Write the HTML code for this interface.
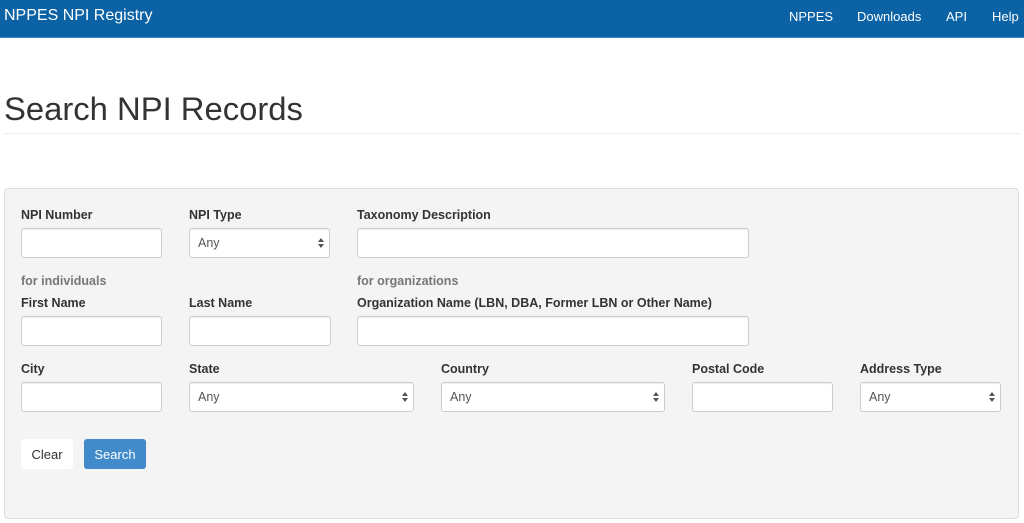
<!DOCTYPE html><html><head><style>
body{margin:0;width:1024px;height:523px;overflow:hidden;background:#fff;font-family:"Liberation Sans",Arial,sans-serif;color:#333;position:relative}
.a{position:absolute}
.nav{left:0;top:0;width:1024px;height:37px;background:#0b62a4;border-bottom:1px solid #3f86c6}
.nav span{position:absolute;color:#fff;font-size:13px;top:9px}
.lbl{position:absolute;font-size:12.5px;font-weight:bold;color:#333}
.hint{position:absolute;font-size:12.5px;font-weight:bold;color:#777}
.in{position:absolute;height:28px;background:#fff;border:1px solid #ccc;border-radius:3px;box-shadow:inset 0 1px 1px rgba(0,0,0,.06)}
.sel{font-size:12.5px;color:#555;line-height:28px;padding-left:8px;box-sizing:content-box}
.sel:after{content:"";position:absolute;right:5px;top:9px;width:0;height:0;border-left:3px solid transparent;border-right:3px solid transparent;border-bottom:4px solid #555}
.sel:before{content:"";position:absolute;right:5px;top:15px;width:0;height:0;border-left:3px solid transparent;border-right:3px solid transparent;border-top:4px solid #555}
</style></head><body>
<div class="a nav"><span style="left:4px;top:7px;font-size:16px">NPPES NPI Registry</span><span style="left:789px">NPPES</span><span style="left:857px">Downloads</span><span style="left:946px">API</span><span style="left:992px">Help</span></div>
<div class="a" style="left:4px;top:90px;font-size:32.8px;color:#333">Search NPI Records</div>
<div class="a" style="left:4px;top:133px;width:1016px;height:1px;background:#eee"></div>
<div class="a" style="left:4px;top:188px;width:1013px;height:329px;background:#f4f4f4;border:1px solid #ddd;border-radius:4px"></div>
<div class="lbl" style="left:21px;top:208px">NPI Number</div>
<div class="lbl" style="left:189px;top:208px">NPI Type</div>
<div class="lbl" style="left:357px;top:208px">Taxonomy Description</div>
<div class="in" style="left:21px;top:228px;width:139px"></div>
<div class="in sel" style="left:189px;top:228px;width:131px">Any</div>
<div class="in" style="left:357px;top:228px;width:390px"></div>
<div class="hint" style="left:21px;top:274px">for individuals</div>
<div class="hint" style="left:357px;top:274px">for organizations</div>
<div class="lbl" style="left:21px;top:296px">First Name</div>
<div class="lbl" style="left:189px;top:296px">Last Name</div>
<div class="lbl" style="left:357px;top:296px">Organization Name (LBN, DBA, Former LBN or Other Name)</div>
<div class="in" style="left:21px;top:316px;width:139px"></div>
<div class="in" style="left:189px;top:316px;width:140px"></div>
<div class="in" style="left:357px;top:316px;width:390px"></div>
<div class="lbl" style="left:21px;top:362px">City</div>
<div class="lbl" style="left:189px;top:362px">State</div>
<div class="lbl" style="left:441px;top:362px">Country</div>
<div class="lbl" style="left:692px;top:362px">Postal Code</div>
<div class="lbl" style="left:860px;top:362px">Address Type</div>
<div class="in" style="left:21px;top:382px;width:139px"></div>
<div class="in sel" style="left:189px;top:382px;width:215px">Any</div>
<div class="in sel" style="left:441px;top:382px;width:214px">Any</div>
<div class="in" style="left:692px;top:382px;width:139px"></div>
<div class="in sel" style="left:860px;top:382px;width:131px">Any</div>
<div class="a" style="left:21px;top:439px;width:52px;height:30px;background:#fff;border-radius:3px;font-size:13px;line-height:31px;text-align:center">Clear</div>
<div class="a" style="left:84px;top:439px;width:62px;height:30px;background:#428bca;border-radius:3px;font-size:13px;line-height:31px;text-align:center;color:#fff">Search</div>
</body></html>
